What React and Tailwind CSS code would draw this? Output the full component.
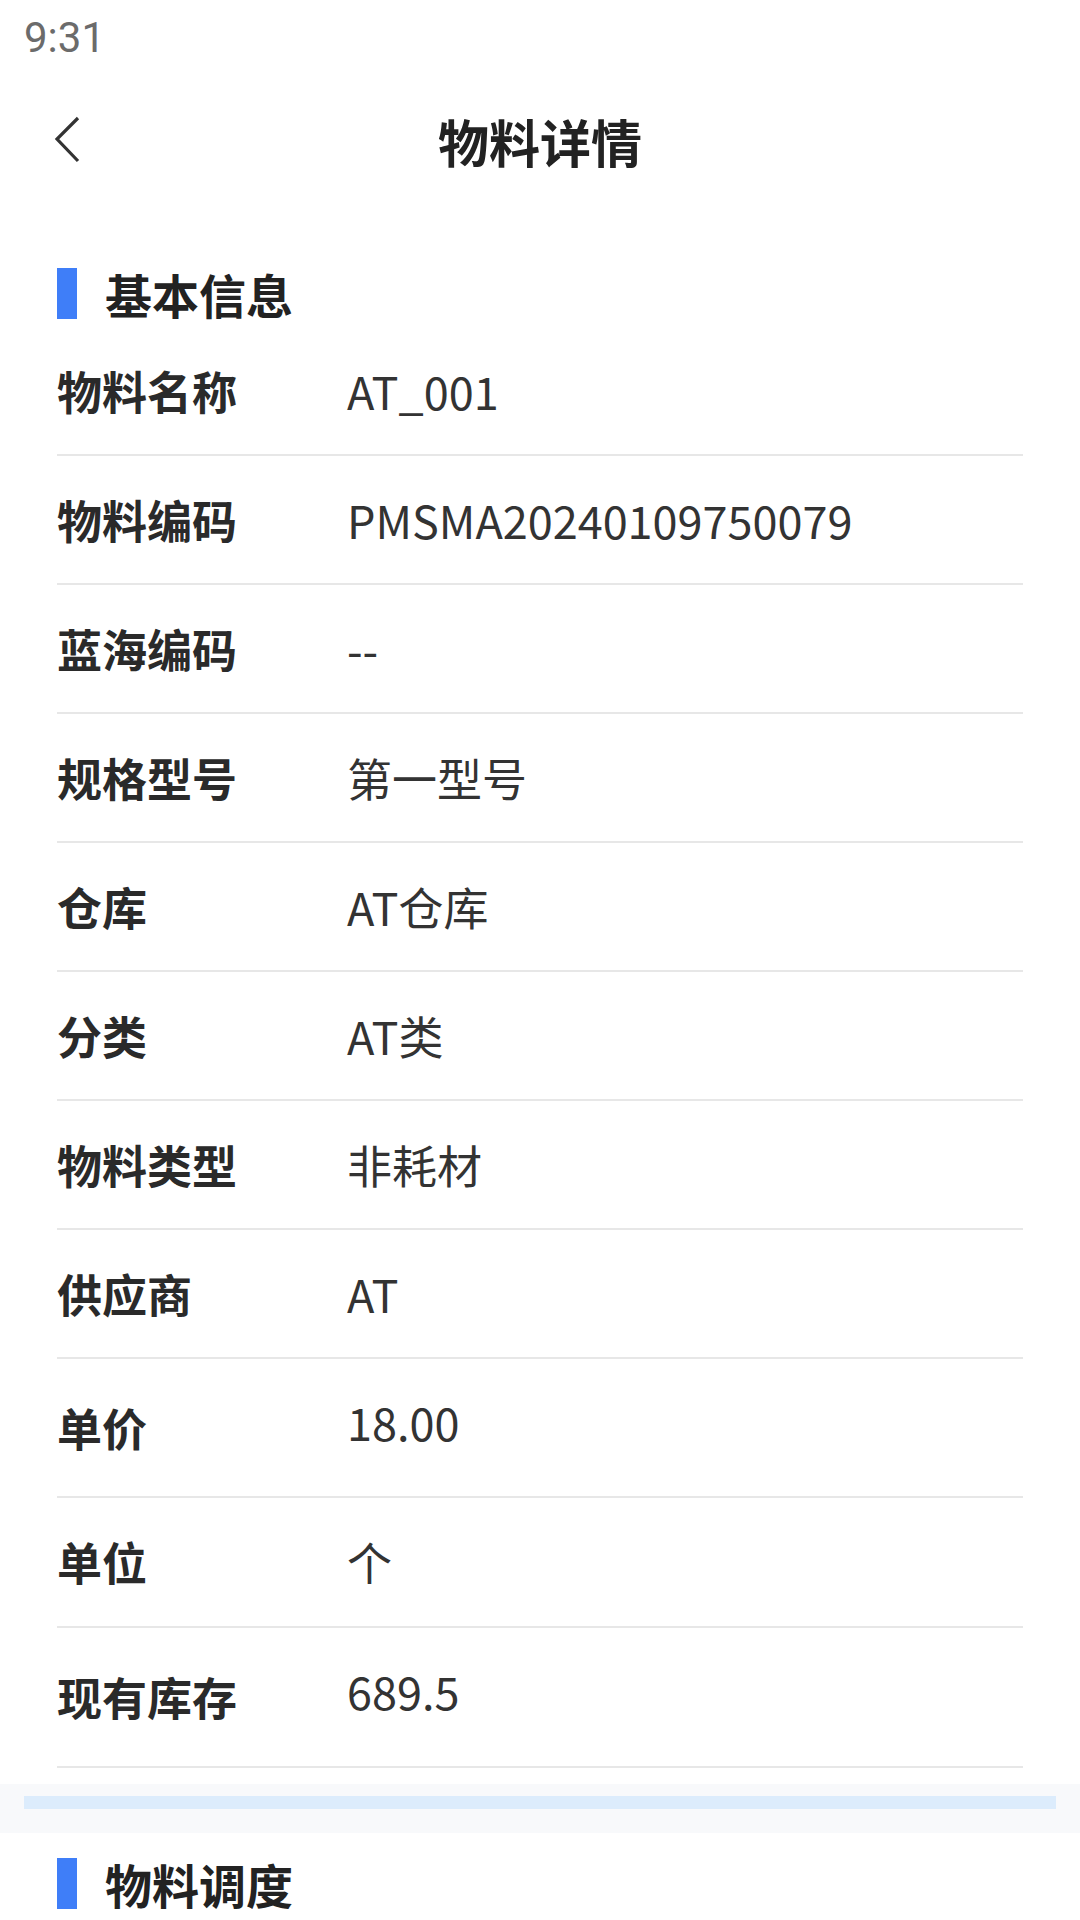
import React from 'react';

const rows = [
  { label: '物料名称', value: 'AT_001', h: 'h-[129px]' },
  { label: '物料编码', value: 'PMSMA20240109750079', h: 'h-[129px]' },
  { label: '蓝海编码', value: '--', h: 'h-[129px]' },
  { label: '规格型号', value: '第一型号', h: 'h-[129px]' },
  { label: '仓库', value: 'AT仓库', h: 'h-[129px]' },
  { label: '分类', value: 'AT类', h: 'h-[129px]' },
  { label: '物料类型', value: '非耗材', h: 'h-[129px]' },
  { label: '供应商', value: 'AT', h: 'h-[129px]' },
  { label: '单价', value: '18.00', h: 'h-[139px]', lift: true },
  { label: '单位', value: '个', h: 'h-[130px]' },
  { label: '现有库存', value: '689.5', h: 'h-[140px]', lift: true },
];

const cjk = { fontFamily: '"Noto Sans CJK SC", "Noto Sans", sans-serif' };

const SectionTitle = ({ children }) => (
  <div className="flex items-center pl-[57px]">
    <div className="w-[20px] h-[51px] bg-[#3f7ef8]" />
    <span className="ml-[28px] text-[47px] font-bold text-[#222] leading-none">{children}</span>
  </div>
);

const App = () => {
  return (
    <div className="w-[1080px] h-[1920px] bg-white overflow-hidden" style={cjk}>
      {/* Status bar */}
      <div className="h-[75px] flex items-center pl-[24px]">
        <span className="text-[42px] text-[#6b6b6b]" style={{ fontFamily: 'Roboto, sans-serif' }}>
          9:31
        </span>
      </div>

      {/* Nav bar */}
      <div className="h-[132px] relative flex items-center justify-center">
        <button className="absolute left-[50px] top-[40px]">
          <svg width="36" height="50" viewBox="0 0 36 50" fill="none">
            <path d="M28 3 L7 24 L28 46" stroke="#333" strokeWidth="3.2" />
          </svg>
        </button>
        <h1 className="text-[51px] font-bold text-[#222] leading-none">物料详情</h1>
      </div>

      {/* 基本信息 */}
      <div className="h-[120px] pt-[61px]">
        <SectionTitle>基本信息</SectionTitle>
      </div>

      <div className="px-[57px]">
        {rows.map((row) => (
          <div key={row.label} className={`flex items-center border-b-2 border-[#e7e7e7] ${row.h}`}>
            <span className="w-[290px] shrink-0 text-[45px] font-bold text-[#2a2a2a]">{row.label}</span>
            <span className={`text-[45px] text-[#333] ${row.lift ? '-mt-[12px]' : ''}`}>{row.value}</span>
          </div>
        ))}
      </div>

      {/* Divider band */}
      <div className="mt-[16px] h-[49px] bg-[#f8f9fb] pt-[12px]">
        <div className="mx-[24px] h-[13px] bg-[#dcecfc]" />
      </div>

      {/* 物料调度 */}
      <div className="pt-[25px]">
        <SectionTitle>物料调度</SectionTitle>
      </div>
    </div>
  );
};

export default App;
